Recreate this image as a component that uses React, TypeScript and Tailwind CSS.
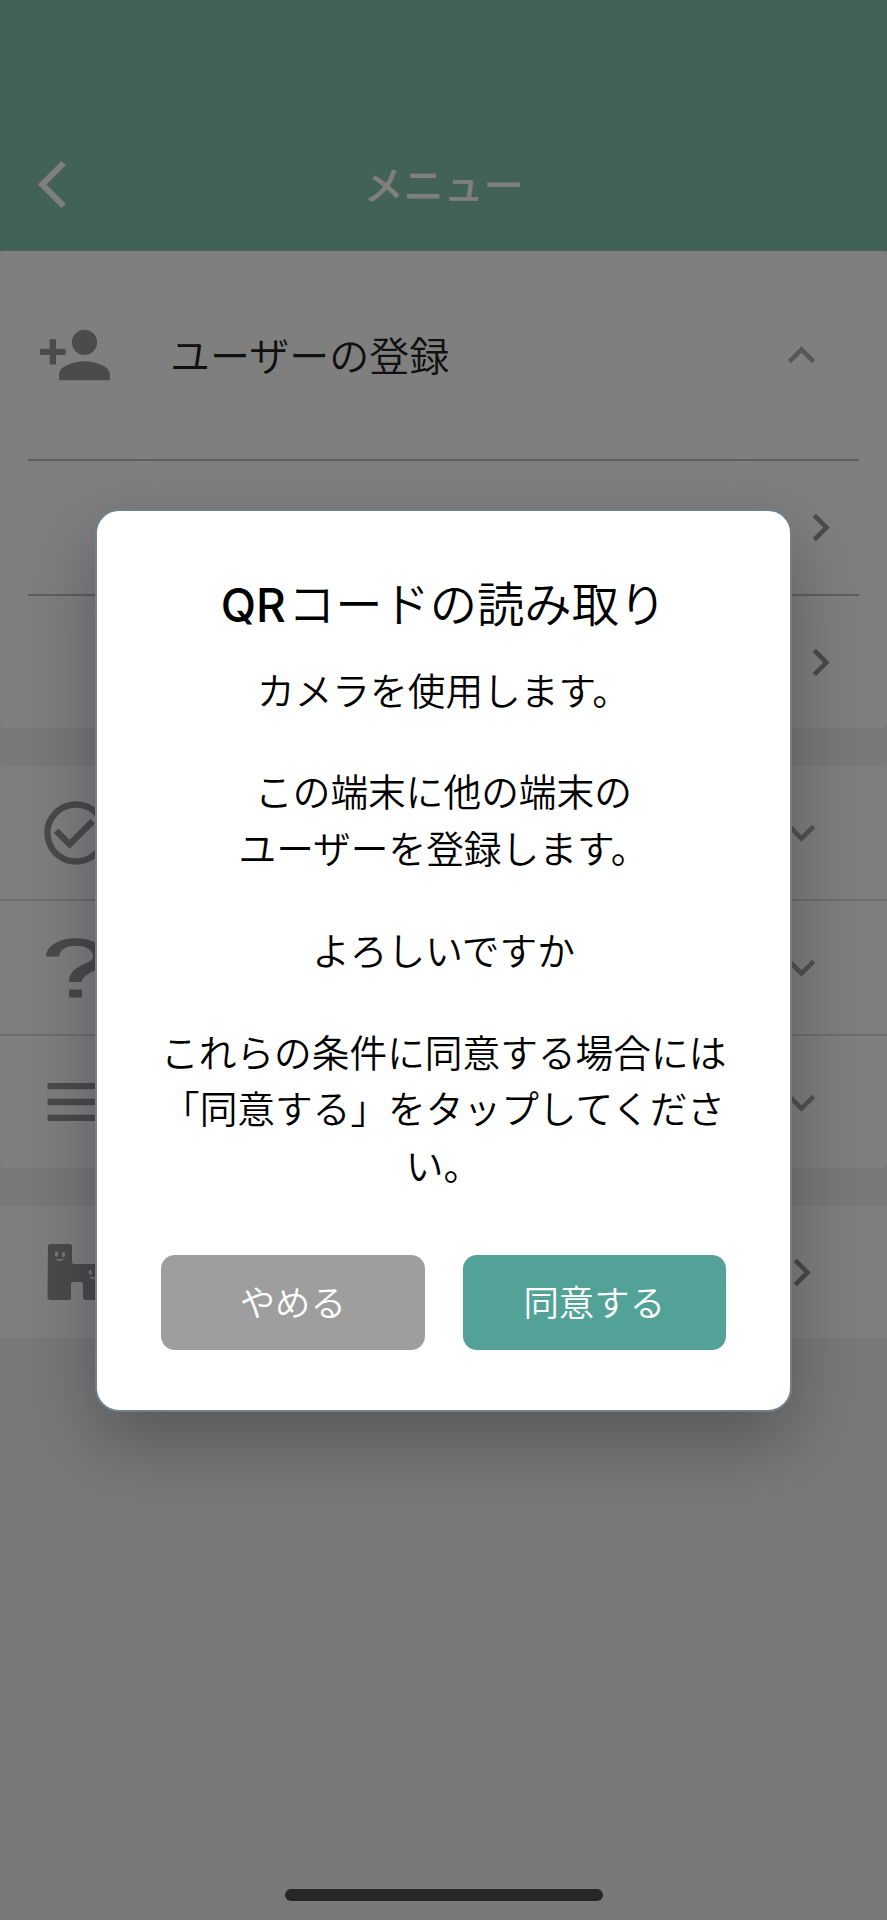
import React from 'react';

interface IconProps {
  d: string;
  className?: string;
}

const PATHS = {
  back: 'M11.67 3.87L9.9 2.1 0 12l9.9 9.9 1.77-1.77L3.54 12z',
  personAdd:
    'M15 12c2.21 0 4-1.79 4-4s-1.79-4-4-4-4 1.79-4 4 1.79 4 4 4zm-9-2V7H4v3H1v2h3v3h2v-3h3v-2H6zm9 4c-2.67 0-8 1.34-8 4v2h16v-2c0-2.66-5.33-4-8-4z',
  check:
    'M16.59 7.58L10 14.17l-3.59-3.58L5 12l5 5 8-8zM12 2C6.48 2 2 6.48 2 12s4.48 10 10 10 10-4.48 10-10S17.52 2 12 2zm0 18c-4.42 0-8-3.58-8-8s3.58-8 8-8 8 3.58 8 8-3.58 8-8 8z',
  menu: 'M3 18h18v-2H3v2zm0-5h18v-2H3v2zm0-7v2h18V6H3z',
  up: 'M12 8l-6 6 1.41 1.41L12 10.83l4.59 4.58L18 14z',
  down: 'M16.59 8.59L12 13.17 7.41 8.59 6 10l6 6 6-6z',
  right: 'M10 6L8.59 7.41 13.17 12l-4.58 4.59L10 18l6-6z',
};

const Icon: React.FC<IconProps> = ({ d, className }) => (
  <svg viewBox="0 0 24 24" fill="currentColor" className={className}>
    <path d={d} />
  </svg>
);

const QuestionIcon = () => (
  <svg viewBox="0 0 76 76" fill="currentColor" className="size-[76px] text-[#969696]">
    <path d="M8.2 26.5C8.2 16 21 8.3 38 8.3S68 16.5 68 27.5C68 40.5 44 42 44 52H31C31 34 55 35 55 26.5C55 20 48 15.8 38 15.800S21.3 20 21.3 26.5zM31 59.5h13v8H31z" />
  </svg>
);

const BuddyIcon = () => (
  <svg viewBox="0 0 76 76" className="size-[76px]">
    <path
      fill="#969696"
      d="M12.5 10h19a2.5 2.5 0 0 1 2.5 2.5V28a2 2 0 0 0 2 2h27a3 3 0 0 1 3 3v30a3 3 0 0 1-3 3H48a3 3 0 0 1-3-3V50a2 2 0 0 0-2-2h-8a2 2 0 0 0-2 2v13.5a2.5 2.5 0 0 1-2.5 2.5h-18A3 3 0 0 1 9.500 63L10 12.5A2.5 2.5 0 0 1 12.5 10z"
    />
    <g fill="#f2f2f2">
      <ellipse cx="18.5" cy="20" rx="1.6" ry="2.8" />
      <ellipse cx="25.5" cy="20.5" rx="1.6" ry="2.8" />
      <ellipse cx="52.3" cy="38.5" rx="1.5" ry="2.6" />
      <ellipse cx="59" cy="38.5" rx="1.5" ry="2.6" />
    </g>
    <path d="M18.5 24.800q3.3 2.8 6.6 0M52.5 43q3 2.8 6 0" fill="none" stroke="#f2f2f2" strokeWidth="1.7" />
  </svg>
);

const Header = () => (
  <header className="h-[251px] bg-[#86c4ae] pt-[119px] text-white">
    <div className="grid h-[131px] grid-cols-[120px_1fr_120px] items-center">
      <Icon d={PATHS.back} className="ml-[38px] size-[57px]" />
      <h1 className="pb-[3px] text-center text-[40px] font-medium leading-none">メニュー</h1>
    </div>
  </header>
);

const Row = ({ icon, chevron, className }: { icon: React.ReactNode; chevron: React.ReactNode; className: string }) => (
  <div className={`flex items-center justify-between pl-[38px] pr-[58px] ${className}`}>
    {icon}
    {chevron}
  </div>
);

const downChevron = <Icon d={PATHS.down} className="size-[55px] text-[#a6a6a6]" />;

const Menu = () => (
  <main>
    <section className="rounded-md bg-white">
      <div className="flex h-[208px] items-center pl-[37px] pr-[58px]">
        <Icon d={PATHS.personAdd} className="size-[76px] text-[#969696]" />
        <span className="ml-[57px] flex-1 pb-[3px] text-[40px] font-[350] text-[#212121]">ユーザーの登録</span>
        <Icon d={PATHS.up} className="size-[55px] text-[#aeaeae]" />
      </div>
      <div className="mx-[28px] flex h-[135px] items-center justify-end border-t-2 border-[#bebebe] pr-[11px]">
        <Icon d={PATHS.right} className="size-[55px] text-[#969696]" />
      </div>
      <div className="mx-[28px] flex h-[134px] items-center justify-end border-t-2 border-[#bebebe] pr-[11px]">
        <Icon d={PATHS.right} className="size-[55px] text-[#969696]" />
      </div>
    </section>

    <section className="mt-[38px] rounded-md bg-white">
      <Row
        className="h-[133px]"
        icon={<Icon d={PATHS.check} className="size-[76px] text-[#969696]" />}
        chevron={downChevron}
      />
      <Row className="h-[135px] border-t-2 border-[#dcdcdc]" icon={<QuestionIcon />} chevron={downChevron} />
      <Row
        className="h-[134px] border-t-2 border-[#dcdcdc]"
        icon={<Icon d={PATHS.menu} className="size-[76px] text-[#969696]" />}
        chevron={downChevron}
      />
    </section>

    <section className="mt-[38px] bg-white">
      <Row
        className="h-[132px]"
        icon={<BuddyIcon />}
        chevron={<Icon d={PATHS.right} className="size-[55px] text-[#969696]" />}
      />
    </section>
  </main>
);

const ConsentDialog = () => (
  <div
    role="dialog"
    className="h-[903px] w-[697px] rounded-[24px] border-2 border-[#6f808b] bg-white px-[64px] pt-[55px] text-center text-black shadow-[0_30px_76px_rgba(0,0,0,0.29)]"
  >
    <h2 className="whitespace-nowrap text-[47.3px] font-[350] leading-[72px]">
      <span className="mr-[2px] font-[Inter] text-[46px] font-medium">QR</span>コードの読み取り
    </h2>
    <div className="mt-[20px] space-y-[45px] whitespace-nowrap text-[37.7px] font-[350] leading-[56.8px]">
      <p>カメラを使用します。</p>
      <p>
        この端末に他の端末の
        <br />
        ユーザーを登録します。
      </p>
      <p>よろしいですか</p>
      <p>
        これらの条件に同意する場合には
        <br />
        「同意する」をタップしてくださ
        <br />
        い。
      </p>
    </div>
    <div className="mt-[62px] flex gap-[38px] text-[35.4px] font-[350] leading-none text-white">
      <button className="h-[95px] flex-1 rounded-[14px] bg-[#9e9e9e] pb-[4px]">やめる</button>
      <button className="h-[95px] flex-1 rounded-[14px] bg-[#52a298] pb-[4px]">同意する</button>
    </div>
  </div>
);

export default function App() {
  return (
    <div className="relative h-[1920px] w-[887px] overflow-hidden bg-[#f2f2f2] font-['Noto_Sans_CJK_JP',sans-serif]">
      <Header />
      <Menu />
      <div className="absolute inset-0 flex items-center justify-center bg-black/50">
        <ConsentDialog />
      </div>
      {/* home indicator */}
      <div className="absolute bottom-[19px] left-[285px] h-[12px] w-[318px] rounded-full bg-[#272727]" />
    </div>
  );
}
